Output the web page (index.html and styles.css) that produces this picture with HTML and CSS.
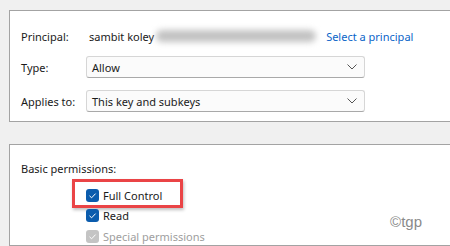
FILE: index.html
```html
<!DOCTYPE html>
<html lang="en">
<head>
    <meta charset="UTF-8">
    <meta name="viewport" content="width=device-width, initial-scale=1.0">
    <title>Permission Entry</title>
    <link rel="stylesheet" href="styles.css">
</head>
<body>
    <div class="panel panel-top">
        <div class="form-row principal-row">
            <span class="label">Principal:</span>
            <span class="principal-name">sambit koley</span>
            <span class="blurred"></span>
            <a class="link" href="#">Select a principal</a>
        </div>
        <div class="form-row">
            <span class="label">Type:</span>
            <div class="select">
                <span>Allow</span>
                <svg class="chevron" width="10" height="6" viewBox="0 0 10 6"><path d="M0.5 0.5 L5 5 L9.5 0.5" fill="none" stroke="#555" stroke-width="1"/></svg>
            </div>
        </div>
        <div class="form-row">
            <span class="label">Applies to:</span>
            <div class="select">
                <span>This key and subkeys</span>
                <svg class="chevron" width="10" height="6" viewBox="0 0 10 6"><path d="M0.5 0.5 L5 5 L9.5 0.5" fill="none" stroke="#555" stroke-width="1"/></svg>
            </div>
        </div>
    </div>

    <div class="panel panel-bottom">
        <div class="section-title">Basic permissions:</div>
        <div class="perm-list">
            <div class="perm highlighted">
                <span class="check"><svg width="13" height="13" viewBox="0 0 13 13"><path d="M3.5 6.8 L5.6 8.8 L9.6 4.6" fill="none" stroke="#fff" stroke-width="1"/></svg></span>
                <span>Full Control</span>
            </div>
            <div class="perm">
                <span class="check"><svg width="13" height="13" viewBox="0 0 13 13"><path d="M3.5 6.8 L5.6 8.8 L9.6 4.6" fill="none" stroke="#fff" stroke-width="1"/></svg></span>
                <span>Read</span>
            </div>
            <div class="perm disabled">
                <span class="check"><svg width="13" height="13" viewBox="0 0 13 13"><path d="M3.5 6.8 L5.6 8.8 L9.6 4.6" fill="none" stroke="#fff" stroke-width="1"/></svg></span>
                <span>Special permissions</span>
            </div>
        </div>
        <div class="watermark">&copy;tgp</div>
    </div>
</body>
</html>
```

FILE: styles.css
```css
/* ===== General ===== */
body {
    margin: 0;
    padding: 10px 0 0 9px;
    background: #f0f0f0;
    font-family: "Segoe UI", "Noto Sans", sans-serif;
    font-size: 11px;
    color: #1a1a1a;
    overflow: hidden;
    height: 246px;
    box-sizing: border-box;
}

.panel {
    background: #fff;
    border: 1px solid #a3a3a3;
    border-right: none;
}

/* ===== Top panel ===== */
.panel-top {
    height: 112px;
    box-sizing: border-box;
    padding: 13px 0 0 11px;
}

.form-row {
    display: flex;
    align-items: center;
    height: 22px;
    margin-bottom: 12px;
}

.principal-row {
    height: 24px;
    margin-bottom: 8px;
}

.label {
    width: 65px;
    flex: none;
}

.principal-name {
    margin-left: 3px;
}

.blurred {
    width: 160px;
    height: 12px;
    margin-left: 2px;
    background: #c2c2c2;
    border-radius: 6px;
    filter: blur(3px);
}

.link {
    margin-left: 10px;
    color: #0a64c8;
    text-decoration: none;
}

.select {
    width: 279px;
    height: 22px;
    box-sizing: border-box;
    display: flex;
    align-items: center;
    justify-content: space-between;
    padding: 0 7px 0 5px;
    background: #fbfbfb;
    border: 1px solid #d6d6d6;
    border-bottom-color: #a9a9a9;
    border-radius: 3px;
}

/* ===== Bottom panel ===== */
.panel-bottom {
    position: relative;
    margin-top: 22px;
    height: 102px;
    box-sizing: border-box;
    padding: 16px 0 0 11px;
}

.section-title {
    line-height: 16px;
}

.perm-list {
    margin: 8px 0 0 65px;
}

.perm {
    position: relative;
    display: flex;
    align-items: center;
    gap: 4px;
    height: 20.5px;
}

.check {
    width: 13px;
    height: 13px;
    border-radius: 3px;
    background: #0b5cad;
    display: flex;
}

.perm.disabled {
    color: #9e9e9e;
}

.perm.disabled .check {
    background: #c4c4c4;
}

.highlighted::after {
    content: '';
    position: absolute;
    left: -14px;
    top: -6px;
    width: 105px;
    height: 23px;
    border: 3px solid #ea4446;
    box-shadow: 1px 2px 3px rgba(0, 0, 0, .25);
}

.watermark {
    position: absolute;
    right: 28px;
    top: 68px;
    font-family: "Liberation Sans", Arial, sans-serif;
    font-size: 15px;
    color: #8a8a8a;
}
```
